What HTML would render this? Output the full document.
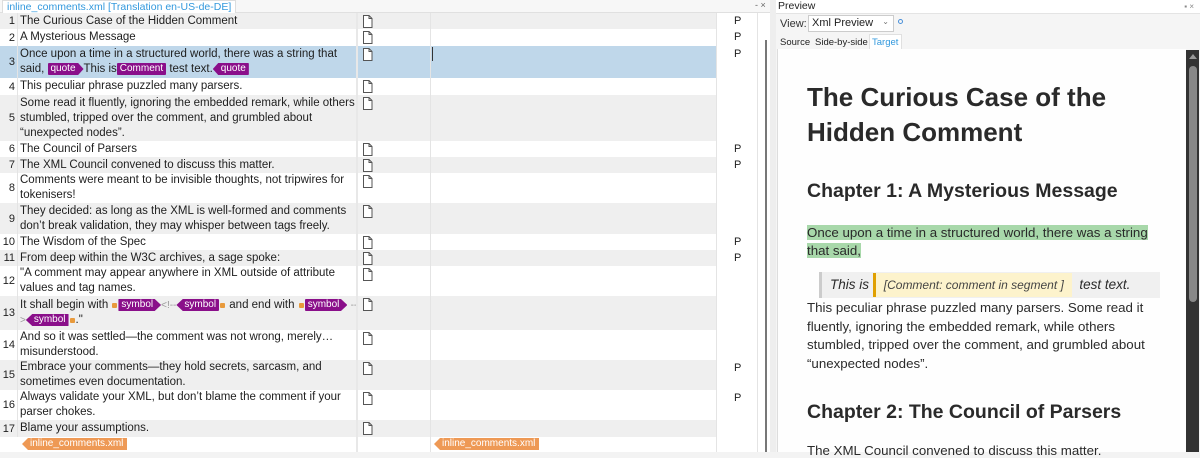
<!DOCTYPE html>
<html><head><meta charset="utf-8"><style>
*{margin:0;padding:0;box-sizing:border-box}
body{width:1200px;height:452px;overflow:hidden;background:#f3f3f3;font-family:"Liberation Sans",sans-serif;font-size:11.5px;color:#1e1e1e;position:relative}
.a{position:absolute}
.row{position:absolute;left:0;width:716px}
.num{position:absolute;left:0;width:17px;text-align:right;padding-right:2px;font-size:11px;line-height:14px}
.src{position:absolute;left:20px;width:338px;line-height:15px}
.ic{position:absolute;left:362px}
.tag{display:inline-block;background:#8a0f8a;color:#fff;font-size:10px;line-height:12px;padding:0 3px;border-radius:1px;vertical-align:1px}
.rt{clip-path:polygon(0 0,85% 0,100% 50%,85% 100%,0 100%);padding-right:8px}
.lt{clip-path:polygon(15% 0,100% 0,100% 100%,15% 100%,0 50%);padding-left:8px}
.lock{display:inline-block;width:5px;height:5px;background:#e89a3c;border-radius:1px;vertical-align:0;margin:0 1px}
.gt{color:#999;font-size:10px}
.P{position:absolute;left:734px;font-size:11px}
</style></head><body>
<div class="a" style="left:0;top:0;width:770px;height:13px;background:#f7f7f7;border-bottom:1px solid #e0e0e0"></div>
<div class="a" style="left:2px;top:0;height:13px;padding:0 4px;background:#fff;border:1px solid #ddd;border-bottom:none;color:#3399dd;font-size:10.5px;line-height:12px">inline_comments.xml [Translation en-US-de-DE]</div>
<div class="a" style="left:755px;top:0;font-size:9px;color:#666">- ×</div>
<div class="a" style="left:0;top:13px;width:770px;height:439px;background:#fff"></div>
<div id="rows"></div>
<div class="a" style="left:17px;top:13px;width:1px;height:424px;background:#e4e4e4"></div>
<div class="a" style="left:356px;top:13px;width:2px;height:439px;background:#e8e8e8"></div>
<div class="a" style="left:430px;top:13px;width:1px;height:439px;background:#e4e4e4"></div>
<div class="a" style="left:716px;top:13px;width:1px;height:439px;background:#e4e4e4"></div>
<div class="a" style="left:757px;top:13px;width:13px;height:439px;background:#fff;border-left:1px solid #e4e4e4"></div>
<div class="a" style="left:765px;top:40px;width:2px;height:412px;background:#777"></div>
<div class="a" style="left:432px;top:47px;width:1px;height:14px;background:#333"></div>
<div class="a" style="left:22px;top:438px;background:#ee9955;color:#fff;font-size:10px;line-height:12px;padding:0 4px 0 8px;clip-path:polygon(6px 0,100% 0,100% 100%,6px 100%,0 50%)">inline_comments.xml</div>
<div class="a" style="left:434px;top:438px;background:#ee9955;color:#fff;font-size:10px;line-height:12px;padding:0 4px 0 8px;clip-path:polygon(6px 0,100% 0,100% 100%,6px 100%,0 50%)">inline_comments.xml</div>
<div class="a" style="left:770px;top:0;width:6px;height:452px;background:#eee"></div>
<div class="a" style="left:776px;top:0;width:424px;height:14px;background:#fff;border-bottom:1px solid #e4e4e4;font-size:10.5px;padding-left:2px;line-height:13px">Preview<span style="position:absolute;right:6px;font-size:8px;color:#888">▪ ×</span></div>
<div class="a" style="left:776px;top:14px;width:424px;height:438px;background:#f5f5f5"></div>
<div class="a" style="left:780px;top:18px;font-size:11px;color:#333">View:</div>
<div class="a" style="left:808px;top:15px;width:86px;height:17px;background:#fff;border:1px solid #ccc;font-size:11px;padding:1px 3px">Xml Preview<span style="position:absolute;right:4px;top:1px;color:#777;font-size:8px">⌄</span></div>
<div class="a" style="left:898px;top:19px;width:5px;height:5px;border:1.5px solid #4a90d9;border-radius:50%"></div>
<div class="a" style="left:780px;top:37px;font-size:9.5px">Source</div>
<div class="a" style="left:815px;top:37px;font-size:9.5px">Side-by-side</div>
<div class="a" style="left:869px;top:34px;width:33px;height:15px;background:#fff;border:1px solid #e0e0e0;border-bottom:none;color:#3399dd;font-size:9.5px;padding:2px 2px">Target</div>
<div class="a" style="left:777px;top:49px;width:409px;height:403px;background:#fefefe;border-left:1px solid #ddd"></div>
<div class="a" style="left:1186px;top:50px;width:13px;height:402px;background:#333"></div>
<div class="a" style="left:1189px;top:66px;width:8px;height:236px;background:#888;border-radius:4px"></div>
<div class="a" style="left:1189px;top:54px;width:0;height:0;border-left:4px solid transparent;border-right:4px solid transparent;border-bottom:5px solid #999"></div>
<div class="a" style="left:807px;top:80px;width:360px;font-size:26px;font-weight:bold;line-height:35px;color:#2a2a2a">The Curious Case of the Hidden Comment</div>
<div class="a" style="left:807px;top:180px;font-size:19.5px;font-weight:bold;color:#2a2a2a;white-space:nowrap">Chapter 1: A Mysterious Message</div>
<div class="a" style="left:807px;top:224px;width:360px;font-size:13.3px;line-height:18px;color:#2a2a2a"><span style="background:#a8d8aa">Once upon a time in a structured world, there was a string that said,</span></div>
<div class="a" style="left:819px;top:272px;width:341px;height:26px;background:#f0f0f0;border-left:3px solid #ccc;font-size:13.5px;font-style:italic;color:#2a2a2a;line-height:26px;padding-left:8px">This is <span style="display:inline-block;background:#fdf3cc;border-left:3px solid #e0a000;padding:0 8px;font-size:12px;line-height:24px;color:#444">[Comment: comment in segment ]</span>&nbsp; test text.</div>
<div class="a" style="left:807px;top:299px;width:352px;font-size:13.3px;line-height:18.5px;color:#2a2a2a">This peculiar phrase puzzled many parsers. Some read it fluently, ignoring the embedded remark, while others stumbled, tripped over the comment, and grumbled about “unexpected nodes”.</div>
<div class="a" style="left:807px;top:401px;font-size:19.5px;font-weight:bold;color:#2a2a2a;white-space:nowrap">Chapter 2: The Council of Parsers</div>
<div class="a" style="left:807px;top:443px;font-size:13.3px;color:#2a2a2a;white-space:nowrap">The XML Council convened to discuss this matter.</div>
<script>
const R=[
[1,13,16,'The Curious Case of the Hidden Comment',1],
[2,29,17,'A Mysterious Message',1],
[3,46,32,'Once upon a time in a structured world, there was a string that said, <span class="tag rt">quote</span>This is<span class="tag">Comment</span> test text.<span class="tag lt">quote</span>',1],
[4,78,17,'This peculiar phrase puzzled many parsers.',0],
[5,95,46,'Some read it fluently, ignoring the embedded remark, while others stumbled, tripped over the comment, and grumbled about “unexpected nodes”.',0],
[6,141,16,'The Council of Parsers',1],
[7,157,16,'The XML Council convened to discuss this matter.',1],
[8,173,30,'Comments were meant to be invisible thoughts, not tripwires for tokenisers!',0],
[9,203,31,'They decided: as long as the XML is well-formed and comments don’t break validation, they may whisper between tags freely.',0],
[10,234,16,'The Wisdom of the Spec',1],
[11,250,16,'From deep within the W3C archives, a sage spoke:',1],
[12,266,30,'"A comment may appear anywhere in XML outside of attribute values and tag names.',0],
[13,296,34,'It shall begin with <span class="lock"></span><span class="tag rt">symbol</span><span class="gt">&lt;!--</span><span class="tag lt">symbol</span><span class="lock"></span> and end with <span class="lock"></span><span class="tag rt">symbol</span> <span class="gt">--&gt;</span><span class="tag lt">symbol</span><span class="lock"></span>."',0],
[14,330,30,'And so it was settled—the comment was not wrong, merely… misunderstood.',0],
[15,360,30,'Embrace your comments—they hold secrets, sarcasm, and sometimes even documentation.',1],
[16,390,30,'Always validate your XML, but don’t blame the comment if your parser chokes.',1],
[17,420,17,'Blame your assumptions.',0]];
let h='';
const ic='<svg width="11" height="13" viewBox="0 0 11 13"><path d="M1.5 .5h5.5l3 3v9h-8.5z" fill="#fff" stroke="#555"/><path d="M7 .5v3h3" fill="none" stroke="#555"/></svg>';
for(const [n,t,ht,s,p] of R){
 const bg=n==3?'#bfd7ea':(n==1||(n>3&&n%2==1))?'#efefef':'#fff';
 const lines=ht>40?3:ht>20?2:1;
 h+=`<div class="row" style="top:${t}px;height:${ht}px;background:${bg}"><div class="num" style="top:${Math.round((ht-14)/2)}px">${n}</div><div class="src" style="top:${Math.round((ht-lines*15)/2)}px">${s}</div><div class="ic" style="top:2px">${ic}</div></div>`;
 if(p)h+=`<div class="P" style="top:${t+2}px">P</div>`;
}
document.getElementById('rows').innerHTML=h;
</script>
</body></html>
